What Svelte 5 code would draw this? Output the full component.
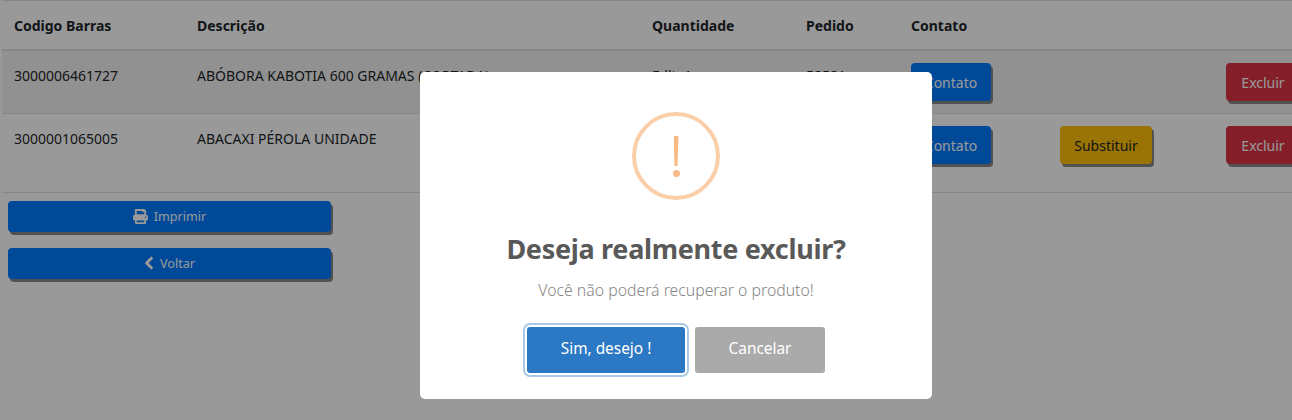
<script>
	const rows = [
		{ code: '3000006461727', name: 'ABÓBORA KABOTIA 600 GRAMAS (CORTADA)', qty: 'Fdlt: 1', order: '58581', swap: false },
		{ code: '3000001065005', name: 'ABACAXI PÉROLA UNIDADE', qty: 'Fdlt: 1', order: '58581', swap: true }
	];
</script>

<main class="page">
	<table>
		<colgroup>
			<col style="width: 183px" />
			<col style="width: 455px" />
			<col style="width: 154px" />
			<col style="width: 105px" />
			<col style="width: 149px" />
			<col style="width: 166px" />
			<col style="width: 90px" />
		</colgroup>
		<thead>
			<tr>
				<th>Codigo Barras</th>
				<th>Descrição</th>
				<th>Quantidade</th>
				<th>Pedido</th>
				<th>Contato</th>
				<th></th>
				<th></th>
			</tr>
		</thead>
		<tbody>
			{#each rows as row}
				<tr>
					<td>{row.code}</td>
					<td>{row.name}</td>
					<td>{row.qty}</td>
					<td>{row.order}</td>
					<td><button class="btn blue">Contato</button></td>
					<td>
						{#if row.swap}
							<button class="btn yellow">Substituir</button>
						{/if}
					</td>
					<td><button class="btn red">Excluir</button></td>
				</tr>
			{/each}
		</tbody>
	</table>

	<div class="actions">
		<button class="wide">
			<svg width="15" height="15" viewBox="0 0 512 512" fill="currentColor" fill-rule="evenodd">
				<path d="M64 32C64 14 78 0 96 0h275c8 0 17 3 23 9l45 45c6 6 9 14 9 23v115c35 0 64 29 64 64v112c0 9-7 16-16 16h-48v96c0 18-14 32-32 32H96c-18 0-32-14-32-32v-96H16c-9 0-16-7-16-16V256c0-35 29-64 64-64zM128 64v112h256v-64h-64V64zM128 392v56h256v-56zM432 256c-13 0-24 11-24 24s11 24 24 24 24-11 24-24-11-24-24-24z" />
			</svg>
			Imprimir
		</button>
		<button class="wide">
			<svg width="10" height="14" viewBox="0 0 320 512" fill="currentColor" stroke="currentColor" stroke-width="36">
				<path d="M34.52 239.03L228.87 44.69c9.37-9.37 24.57-9.37 33.94 0l22.67 22.67c9.36 9.36 9.37 24.52.04 33.9L131.49 256l154.02 154.75c9.34 9.38 9.32 24.54-.04 33.9l-22.67 22.67c-9.37 9.37-24.57 9.37-33.94 0L34.52 272.97c-9.37-9.37-9.37-24.57 0-33.94z" />
			</svg>
			Voltar
		</button>
	</div>
</main>

<div class="overlay">
	<div class="modal">
		<div class="icon"><span class="bar"></span><span class="dot"></span></div>
		<h2>Deseja realmente excluir?</h2>
		<p>Você não poderá recuperar o produto!</p>
		<div class="modal-actions">
			<button class="confirm">Sim, desejo !</button>
			<button class="cancel">Cancelar</button>
		</div>
	</div>
</div>

<style>
	:global(body) {
		margin: 0;
		background: #fff;
		overflow: hidden;
	}

	.page {
		width: 1292px;
		height: 420px;
		overflow: hidden;
		font-family: 'Noto Sans', 'Open Sans', sans-serif;
		color: #212529;
		box-sizing: border-box;
	}

	table {
		margin-left: 2px;
		width: 1302px;
		table-layout: fixed;
		border-collapse: collapse;
		font-size: 14px;
	}

	th {
		height: 48px;
		padding: 0 12px;
		text-align: left;
		font-weight: 700;
		border-top: 1px solid #dee2e6;
		border-bottom: 2px solid #dee2e6;
		vertical-align: middle;
	}

	td {
		padding: 12px;
		vertical-align: top;
		border-top: 1px solid #dee2e6;
		line-height: 25px;
		height: 54px;
	}

	tbody tr:first-child td {
		background: #f2f2f2;
		height: 38px;
	}

	tbody tr:last-child td {
		border-bottom: 1px solid #dee2e6;
	}

	.btn {
		border: 0;
		border-radius: 4px;
		height: 38px;
		padding: 0 13px;
		font: inherit;
		box-shadow: 2px 3px 0 #888;
		color: #fff;
		display: block;
	}

	.blue {
		background: #007bff;
		width: 80px;
	}

	.yellow {
		background: #ffc107;
		color: #212529;
		width: 92px;
	}

	.red {
		background: #dc3545;
		width: 74px;
	}

	.actions {
		display: flex;
		flex-direction: column;
		gap: 16px;
		padding: 8px 0 0 8px;
	}

	.wide {
		width: 323px;
		height: 31px;
		background: #007bff;
		color: #fff;
		border: 0;
		border-radius: 4px;
		box-shadow: 2px 3px 0 #888;
		font: inherit;
		font-size: 12.6px;
		display: flex;
		align-items: center;
		justify-content: center;
		gap: 6px;
		padding: 0 0 1px;
	}

	.overlay {
		position: fixed;
		inset: 0;
		background: rgba(0, 0, 0, 0.4);
		display: flex;
		justify-content: center;
		align-items: flex-start;
		padding: 72px 0 0 60px;
		box-sizing: border-box;
		font-family: 'Noto Sans', 'Open Sans', sans-serif;
	}

	.modal {
		width: 512px;
		height: 327px;
		background: #fff;
		border-radius: 5px;
		display: flex;
		flex-direction: column;
		align-items: center;
		padding-top: 40px;
		box-sizing: border-box;
	}

	.icon {
		width: 88px;
		height: 88px;
		box-sizing: border-box;
		border: 4px solid #facea8;
		border-radius: 50%;
		display: flex;
		flex-direction: column;
		align-items: center;
		padding-top: 20px;
		gap: 4px;
	}

	.bar {
		width: 5px;
		height: 30px;
		background: #f8bb86;
		clip-path: polygon(0 0, 100% 0, 80% 100%, 20% 100%);
	}

	.dot {
		width: 7px;
		height: 7px;
		border-radius: 50%;
		background: #f8bb86;
	}

	h2 {
		margin: 31px 0 0;
		font-size: 27px;
		line-height: 36px;
		font-weight: 700;
		color: #595959;
		letter-spacing: -0.3px;
	}

	p {
		margin: 11px 0 0;
		font-size: 15.8px;
		font-weight: 300;
		line-height: 24px;
		color: #858585;
	}

	.modal-actions {
		display: flex;
		gap: 10px;
		margin-top: 25px;
	}

	.modal-actions button {
		height: 46px;
		border: 0;
		border-radius: 3px;
		color: #fff;
		font: inherit;
		font-size: 15.4px;
		font-weight: 400;
		padding: 0 0 3px;
	}

	.confirm {
		width: 158px;
		background: #2b78c5;
		box-shadow: 0 0 0 2px #fff, 0 0 0 4px rgba(43, 120, 197, 0.4);
	}

	.cancel {
		width: 130px;
		background: #aaa;
	}
</style>
